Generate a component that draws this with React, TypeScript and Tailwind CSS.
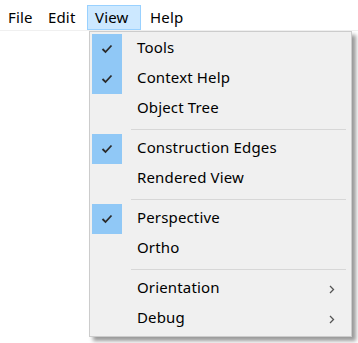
import React from "react";

type Item =
  | { type: "item"; label: string; checked?: boolean; sub?: boolean }
  | { type: "sep" };

const items: Item[] = [
  { type: "item", label: "Tools", checked: true },
  { type: "item", label: "Context Help", checked: true },
  { type: "item", label: "Object Tree" },
  { type: "sep" },
  { type: "item", label: "Construction Edges", checked: true },
  { type: "item", label: "Rendered View" },
  { type: "sep" },
  { type: "item", label: "Perspective", checked: true },
  { type: "item", label: "Ortho" },
  { type: "sep" },
  { type: "item", label: "Orientation", sub: true },
  { type: "item", label: "Debug", sub: true },
];

function Check() {
  return (
    <svg width="12" height="10" viewBox="0 0 12 10" fill="none">
      <path d="M1.5 5 L4.5 8 L10.5 1.5" stroke="#2b2b2b" strokeWidth="1.8" />
    </svg>
  );
}

function Chevron() {
  return (
    <svg width="6" height="9" viewBox="0 0 6 9" fill="none">
      <path d="M1 1 L4.5 4.5 L1 8" stroke="#555555" strokeWidth="1.3" />
    </svg>
  );
}

export default function App() {
  return (
    <div
      className="relative w-[358px] h-[343px] bg-white text-[15px] text-black overflow-hidden tracking-[0.15px]"
      style={{ fontFamily: '"Noto Sans", "Open Sans", sans-serif' }}
    >
      <div className="flex h-[31px] items-stretch border-b border-[#f0f0f0] pt-[5px]">
        <div className="flex w-[40px] items-center pl-[7px] border border-transparent">File</div>
        <div className="flex w-[47px] items-center pl-[7px] border border-transparent">Edit</div>
        <div className="flex w-[54px] items-center pl-[7px] border border-[#99d1ff] bg-[#cce8ff]">View</div>
        <div className="flex items-center pl-[8px] pr-[8px] border border-transparent">Help</div>
      </div>
      <div className="absolute left-[89px] top-[31px] w-[263px] border border-[#cccccc] bg-[#f0f0f0] pt-[2px] pb-[2px] pl-[2px] pr-[2px] shadow-[4px_4px_4px_rgba(0,0,0,0.4)]">
        {items.map((it, i) =>
          it.type === "sep" ? (
            <div key={i} className="h-[10px] flex items-center pl-[39px] pr-[3px]">
              <div className="h-px w-full bg-[#d7d7d7]" />
            </div>
          ) : (
            <div key={i} className="flex h-[30px] items-center">
              <div
                className={
                  "flex h-full w-[30px] items-center justify-center " +
                  (it.checked ? "bg-[#90c8f6]" : "")
                }
              >
                {it.checked ? <Check /> : null}
              </div>
              <div className="ml-[15px] flex-1 leading-none pb-[3px]">{it.label}</div>
              {it.sub ? (
                <div className="mr-[14px] flex items-center">
                  <Chevron />
                </div>
              ) : null}
            </div>
          )
        )}
      </div>
    </div>
  );
}
